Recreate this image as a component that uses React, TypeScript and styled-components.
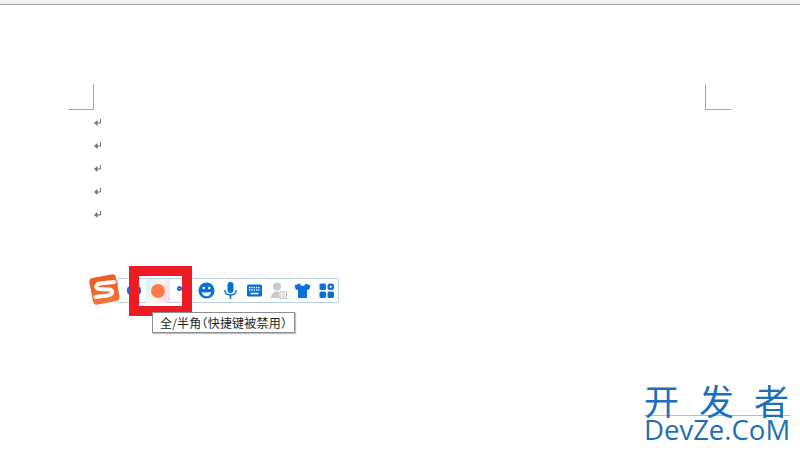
import styled, { createGlobalStyle } from 'styled-components';

const GlobalStyle = createGlobalStyle`
  html,
  body {
    margin: 0;
    padding: 0;
    background: #fff;
    overflow: hidden;
  }
`;

const Window = styled.div`
  position: relative;
  width: 800px;
  height: 450px;
  background: #fff;
  overflow: hidden;
  font-family: 'Noto Sans CJK SC', 'Liberation Sans', sans-serif;
`;

const Ribbon = styled.div`
  height: 4px;
  background: #f0f0f0;
  border-bottom: 1px solid #a0a0a0;
`;

const Page = styled.div`
  padding: 79px 69px 0 68px;
`;

const MarginMarks = styled.div`
  display: flex;
  justify-content: space-between;
`;

const CropMark = styled.div<{ $side: 'left' | 'right' }>`
  width: 25px;
  height: 25px;
  border-bottom: 1px solid #a6a6a6;
  border-${(p) => (p.$side === 'left' ? 'right' : 'left')}: 1px solid #a6a6a6;
`;

const Paragraphs = styled.div`
  display: flex;
  flex-direction: column;
  gap: 16px;
  padding: 9px 0 0 26px;
`;

const ReturnMark = styled.svg`
  display: block;
  width: 8px;
  height: 7px;
`;

const ImeBar = styled.div`
  position: absolute;
  left: 117px;
  top: 278px;
  width: 222px;
  height: 25px;
  box-sizing: border-box;
  background: #fff;
  border: 1px solid #b9cfe4;
  border-radius: 2px;
  display: flex;
  align-items: center;
  padding-left: 80px;
  gap: 7px;
`;

const ToolIcon = styled.svg`
  display: block;
  flex: none;
  width: 17px;
  height: 17px;
`;

const SogouLogo = styled.svg`
  position: absolute;
  left: 88px;
  top: 273px;
  width: 33px;
  height: 33px;
`;

const MoonGlyph = styled.div`
  position: absolute;
  left: 127px;
  top: 286px;
  width: 14px;
  height: 9px;
  border-radius: 4px;
  background: #0a6fd8;
`;

const RingGlyph = styled.div`
  position: absolute;
  left: 177px;
  top: 286px;
  width: 5px;
  height: 5px;
  box-sizing: border-box;
  border-radius: 50%;
  border: 2px solid #0a6fd8;
  background: #fff;
`;

const Highlight = styled.div`
  position: absolute;
  left: 129px;
  top: 266px;
  width: 63px;
  height: 50px;
  box-sizing: border-box;
  border: 10px solid #ed1c24;
  display: flex;
  align-items: center;
  padding-left: 7px;
`;

const Swatch = styled.div`
  width: 24px;
  height: 24px;
  background: linear-gradient(110deg, #d2f4fb 0%, #fbf8ea 50%, #f4d2f9 100%);
  display: flex;
  align-items: center;
  justify-content: center;
`;

const SwatchDot = styled.div`
  width: 14px;
  height: 14px;
  border-radius: 50%;
  background: #ff7a4a;
`;

const Tooltip = styled.div`
  position: absolute;
  left: 152px;
  top: 312px;
  width: 143px;
  height: 21px;
  box-sizing: border-box;
  background: #fff;
  border: 1px solid #8a8f96;
  box-shadow: 1px 1px 1px rgba(0, 0, 0, 0.25);
  font-size: 12px;
  font-feature-settings: 'halt';
  letter-spacing: 0.2px;
  line-height: 19px;
  padding-left: 7px;
  color: #222;
  white-space: nowrap;
`;

const Watermark = styled.div`
  position: absolute;
  left: 644px;
  top: 384px;
  width: 146px;
  color: #1b6fbb;
`;

const WatermarkTitle = styled.div`
  display: flex;
  justify-content: space-between;
  height: 31px;
  padding-right: 1px;
  border-bottom: 1px solid #7fd0f2;
`;

const WatermarkGlyph = styled.div`
  font-size: 35px;
  line-height: 31px;
  height: 31px;
`;

const WatermarkSite = styled.div`
  font-family: 'Open Sans', 'Liberation Sans', sans-serif;
  font-size: 27.5px;
  line-height: 27px;
  white-space: nowrap;
`;

const BLUE = '#0a6fd8';

const Return = () => (
  <ReturnMark viewBox="0 0 8 7">
    <path d="M6.5 0v4H2" fill="none" stroke="#707070" strokeWidth="1" />
    <path d="M0 4 3.500 1v6z" fill="#707070" />
  </ReturnMark>
);

export default function App() {
  return (
    <>
      <GlobalStyle />
      <Window>
        <Ribbon />
        <Page>
          <MarginMarks>
            <CropMark $side="left" />
            <CropMark $side="right" />
          </MarginMarks>
          <Paragraphs>
            <Return />
            <Return />
            <Return />
            <Return />
            <Return />
          </Paragraphs>
        </Page>

        <ImeBar>
          {/* smiley */}
          <ToolIcon viewBox="0 0 17 17">
            <circle cx="8.5" cy="8.5" r="8" fill={BLUE} />
            <circle cx="5.8" cy="6" r="1.3" fill="#fff" />
            <circle cx="11.2" cy="6" r="1.3" fill="#fff" />
            <path d="M3.8 10c1.500.6 8 .6 9.400 0-.3 2.600-2.200 4.200-4.700 4.200S4.100 12.600 3.800 10z" fill="#fff" />
          </ToolIcon>
          {/* mic */}
          <ToolIcon viewBox="0 0 17 17">
            <rect x="5.5" y="0" width="6" height="11" rx="3" fill={BLUE} />
            <path d="M2.800 8c0 3.400 2.400 5 5.700 5s5.700-1.600 5.700-5" fill="none" stroke={BLUE} strokeWidth="1.400" />
            <path d="M8.500 13v4" stroke={BLUE} strokeWidth="1.600" />
          </ToolIcon>
          {/* keyboard */}
          <ToolIcon viewBox="0 0 17 17">
            <rect x="1" y="2.500" width="15" height="12" rx="1.500" fill={BLUE} />
            <path d="M3 5.500h11M3 8h11" stroke="#fff" strokeWidth="1.400" strokeDasharray="1.300 1" />
            <path d="M4.500 11.500h8" stroke="#fff" strokeWidth="1.500" />
          </ToolIcon>
          {/* account, greyed out */}
          <ToolIcon viewBox="0 0 17 17">
            <circle cx="7" cy="4.500" r="4" fill="#c8c8c8" />
            <path d="M1 16c0-4 2.500-6.500 6-6.500 1 0 1.500.2 2 .5v6z" fill="#c8c8c8" />
            <rect x="10" y="10" width="6.500" height="6.500" fill="#fff" stroke="#c0c0c0" />
            <path d="M11.800 12.500h3M11.800 14.300h3" stroke="#c0c0c0" />
          </ToolIcon>
          {/* skin */}
          <ToolIcon viewBox="0 0 17 17">
            <path d="M5.500 1.500.5 3.500 2 8l2-.5V16h9V7.500l2 .5 1.500-4.500-5-2c-.3 1.500-1.300 2.300-3 2.300s-2.200-.8-2.500-2.300z" fill={BLUE} />
          </ToolIcon>
          {/* toolbox */}
          <ToolIcon viewBox="0 0 17 17">
            <rect x="1.500" y="1.500" width="6.500" height="6.500" rx="1.500" fill={BLUE} />
            <rect x="9.500" y="1.500" width="6.500" height="6.500" rx="2.500" fill={BLUE} />
            <circle cx="12.750" cy="4.750" r="1.100" fill="#fff" />
            <rect x="1.500" y="9.500" width="6.500" height="6.500" rx="1.500" fill={BLUE} />
            <rect x="9.500" y="9.500" width="6.500" height="6.500" rx="1.500" fill={BLUE} />
          </ToolIcon>
        </ImeBar>

        <SogouLogo viewBox="0 0 33 33">
          <defs>
            <linearGradient id="sogou" x1="0" y1="0" x2="0" y2="1">
              <stop offset="0" stopColor="#ee5a22" />
              <stop offset="1" stopColor="#f4743a" />
            </linearGradient>
          </defs>
          <rect x="3" y="3" width="27" height="27" rx="4" fill="url(#sogou)" transform="rotate(-11 16.500 16.500)" />
          <path
            d="M26 9 12 10.500c-5 .8-5 5.500-.5 5.700l9 .3c5 .2 5 5-.3 5.800L7.500 24"
            fill="none"
            stroke="#fff"
            strokeWidth="3.800"
            strokeLinecap="round"
          />
        </SogouLogo>
        <MoonGlyph />
        <Highlight>
          <Swatch>
            <SwatchDot />
          </Swatch>
        </Highlight>
        <RingGlyph />

        <Tooltip>全/半角（快捷键被禁用）</Tooltip>

        <Watermark>
          <WatermarkTitle>
            <WatermarkGlyph>开</WatermarkGlyph>
            <WatermarkGlyph>发</WatermarkGlyph>
            <WatermarkGlyph>者</WatermarkGlyph>
          </WatermarkTitle>
          <WatermarkSite>DevZe.CoM</WatermarkSite>
        </Watermark>
      </Window>
    </>
  );
}
